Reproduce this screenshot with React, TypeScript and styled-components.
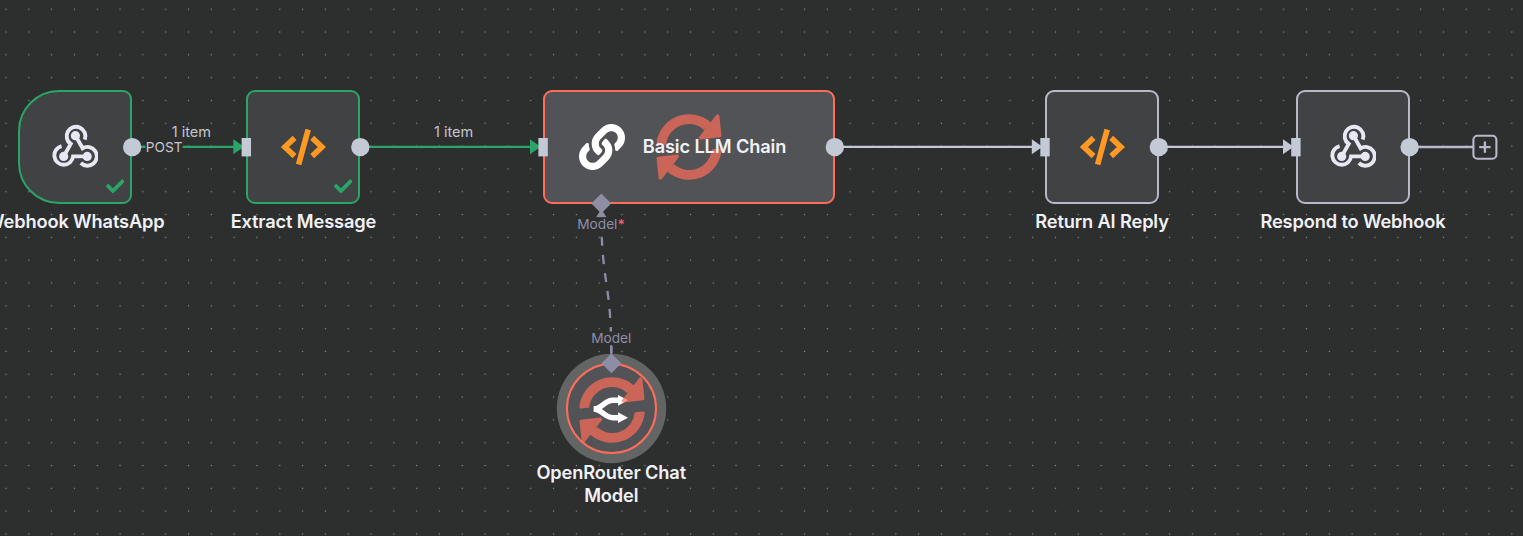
import React from 'react';
import styled, { createGlobalStyle, css } from 'styled-components';
import { FaCheck, FaLink } from 'react-icons/fa';

const colors = {
  canvas: '#2d2e2e',
  dot: '#8c8d8d',
  node: '#414244',
  nodeRunning: '#525356',
  success: '#29a568',
  error: '#ff6d5a',
  handle: '#c3c9d5',
  border: '#b5b9c9',
  sub: '#8d8ea6',
  text: '#f0f1f6',
};

const GlobalStyle = createGlobalStyle`
  body { margin: 0; background: ${colors.canvas}; }
  * { box-sizing: border-box; }
`;

const Canvas = styled.main`
  position: relative;
  width: 1523px;
  height: 536px;
  overflow: hidden;
  background: ${colors.canvas};
  font-family: Inter, 'Liberation Sans', sans-serif;
`;

const Layer = styled.svg`
  position: absolute;
  inset: 0;
  width: 100%;
  height: 100%;
`;

type Status = 'idle' | 'success' | 'error';
const borderOf: Record<Status, string> = {
  idle: colors.border,
  success: colors.success,
  error: colors.error,
};

/* One item on the free canvas: its box with the name below it. */
const CanvasNode = styled.section<{ $x: number; $y: number; $w?: number; $gap?: number }>`
  position: absolute;
  left: ${p => p.$x}px;
  top: ${p => p.$y}px;
  width: ${p => p.$w ?? 114}px;
  display: flex;
  flex-direction: column;
  align-items: center;
  gap: ${p => p.$gap ?? 6}px;
`;

const NodeBox = styled.div<{ $status: Status; $trigger?: boolean }>`
  position: relative;
  width: 100%;
  height: 114px;
  display: flex;
  align-items: center;
  justify-content: center;
  border: 2px solid ${p => borderOf[p.$status]};
  border-radius: ${p => (p.$trigger ? '41px 9px 9px 41px' : '9px')};
  background: ${p => (p.$status === 'error' ? colors.nodeRunning : colors.node)};
`;

const ChainBody = styled.div`
  width: 100%;
  display: flex;
  align-items: center;
  gap: 17.4px;
  padding: 0 0 1px 34.4px;
`;

const ModelCircle = styled.div`
  position: relative;
  width: 91.4px;
  height: 91.4px;
  display: flex;
  align-items: center;
  justify-content: center;
  border: 2px solid ${colors.error};
  border-radius: 50%;
  background: ${colors.nodeRunning};
  box-shadow: 0 0 0 9.2px #636464;
`;

const labelText = css`
  font-size: 18.25px;
  font-weight: 570;
  letter-spacing: -0.15px;
  line-height: 23px;
  color: ${colors.text};
`;

const Title = styled.span`
  ${labelText}
  position: relative;
  z-index: 1;
  white-space: nowrap;
`;

const NodeLabel = styled.div<{ $w?: number }>`
  ${labelText}
  width: ${p => p.$w ?? 220}px;
  text-align: center;
`;

const EdgeLabel = styled.div<{ $x: number; $y: number; $size?: number; $color?: string; $backed?: boolean }>`
  position: absolute;
  left: ${p => p.$x}px;
  top: ${p => p.$y}px;
  transform: translate(-50%, -50%);
  font-size: ${p => p.$size ?? 13.7}px;
  line-height: 13px;
  white-space: nowrap;
  color: ${p => p.$color ?? '#c3c6d0'};
  background: ${p => (p.$backed ? colors.canvas : 'transparent')};
`;

const Required = styled.span`
  font-weight: 600;
  color: #f9596c;
`;

const Check = styled(FaCheck)`
  position: absolute;
  right: 6px;
  bottom: 6.6px;
  width: 18.5px;
  height: 18.5px;
  color: ${colors.success};
`;

const SpinnerSvg = styled.svg<{ $x: number; $y: number }>`
  position: absolute;
  left: ${p => p.$x}px;
  top: ${p => p.$y}px;
  width: 70px;
  height: 70px;
  opacity: 0.7;
`;

const Spinner = ({ x, y }: { x: number; y: number }) => (
  <SpinnerSvg $x={x} $y={y} viewBox="-35 -35 70 70" fill={colors.error} stroke={colors.error} strokeLinejoin="round">
    {[0, 180].map(angle => (
      <g key={angle} transform={`rotate(${angle})`}>
        <path
          d="M-31.8 -2.5A32 32 0 0 1 21.6 -23.6L15 -18.2A23.4 23.4 0 0 0 -23.6 -3.2Z"
          strokeWidth="1.8"
        />
        <path d="M28.6 -31L30.8 -11.4L11.6 -9.2Z" strokeWidth="3.4" />
      </g>
    ))}
  </SpinnerSvg>
);

const ChainLink = styled(FaLink)`
  width: 46px;
  height: 46px;
  flex: none;
  color: #fff;
`;

const WebhookIcon = () => (
  <svg width="46" height="46" viewBox="0 0 46 46" fill="none" stroke="#e6e9f4" strokeWidth="3.9">
    <path d="M32.8 15.6A9.4 9.4 0 1 0 18.7 19.9L11.7 32.4" />
    <path d="M9.6 22.2A9.4 9.4 0 1 0 21.1 32.4H35.2" />
    <path d="M28.8 39A9.4 9.4 0 1 0 30.6 24.2L23.5 11.6" />
    <g fill="#e6e9f4" stroke="none">
      <circle cx="23.4" cy="11.7" r="4.6" />
      <circle cx="11.7" cy="32.4" r="4.6" />
      <circle cx="35.2" cy="32.4" r="4.6" />
    </g>
  </svg>
);

const CodeIcon = () => (
  <svg width="46" height="46" viewBox="0 0 46 46" fill="none" stroke="#ff9922" strokeWidth="5.6">
    <path d="M14.6 13.9L4.9 23L14.6 32.1" />
    <path d="M32.2 13.9L41.9 23L32.2 32.1" />
    <path d="M28.2 5.6L18.6 40.4" />
  </svg>
);

const RouterIcon = () => (
  <svg width="36" height="30" viewBox="0 0 36 30" fill="none" stroke="#fff" strokeWidth="5.4">
    <path d="M0.8 15C9 15 11 6.3 20 6.3H26" />
    <path d="M0.8 15C9 15 11 23.7 20 23.7H26" />
    <path d="M25 0.9L35 6.3L25 11.7ZM25 18.3L35 23.7L25 29.1Z" fill="#fff" stroke="none" />
  </svg>
);

const DotGrid = () => (
  <Layer>
    <defs>
      <pattern id="dots" x="-5.4" y="-2.2" width="22.816" height="22.816" patternUnits="userSpaceOnUse">
        <circle cx="11.4" cy="11.4" r="0.7" fill={colors.dot} />
      </pattern>
    </defs>
    <rect width="100%" height="100%" fill="url(#dots)" />
  </Layer>
);

const Edges = () => (
  <Layer fill="none" strokeWidth="2.3">
    <g stroke={colors.success}>
      <path d="M132 146.8H235M360 146.8H532" />
    </g>
    <g stroke={colors.handle}>
      <path d="M835 146.8H1034M1159 146.8H1285" />
    </g>
    <path d="M1410 147H1473" stroke={colors.border} />
    <path d="M611.3 362V346" stroke={colors.sub} />
    <path
      d="M611.3 353C611.3 283 601.3 283 601.3 213"
      stroke={colors.sub}
      strokeDasharray="9.1 9.1"
      strokeDashoffset="-16.7"
    />
    <g fill={colors.success}>
      <path d="M233.3 139.2L244 146.8L233.3 154.2Z" />
      <path d="M530 139.2L540.7 146.8L530 154.2Z" />
    </g>
    <g fill={colors.handle}>
      <path d="M1031.8 139.2L1042.5 146.8L1031.8 154.2Z" />
      <path d="M1283 139.2L1293.7 146.8L1283 154.2Z" />
    </g>
    <path d="M601.3 209L606.5 217.3H596.1Z" fill={colors.sub} />
  </Layer>
);

const Handles = () => (
  <Layer>
    <g fill={colors.handle}>
      {[132.2, 360.3, 834.8, 1158.8, 1409.6].map(x => (
        <circle key={x} cx={x} cy={147.1} r={9.2} />
      ))}
      {[241.6, 538.4, 1040.3, 1291.2].map(x => (
        <rect key={x} x={x} y={138} width={9.4} height={18.4} />
      ))}
    </g>
    <g fill={colors.sub}>
      <path d="M601.3 193.6L611.2 203.5L601.3 213.4L591.4 203.5Z" />
      <path d="M611.4 353.4L621.3 363.3L611.4 373.2L601.5 363.3Z" />
    </g>
    <g fill="none" stroke={colors.border}>
      <rect x="1473.4" y="135.7" width="23" height="23" rx="4" strokeWidth="2.1" fill={colors.canvas} />
      <path d="M1484.9 141.4V152.8M1479.2 147.1H1490.6" strokeWidth="2.3" />
    </g>
  </Layer>
);

export default function App() {
  return (
    <Canvas>
      <GlobalStyle />
      <DotGrid />
      <Edges />
      <CanvasNode $x={18.3} $y={90}>
        <NodeBox $status="success" $trigger>
          <WebhookIcon />
          <Check />
        </NodeBox>
        <NodeLabel>Webhook WhatsApp</NodeLabel>
      </CanvasNode>
      <CanvasNode $x={246.4} $y={90}>
        <NodeBox $status="success">
          <CodeIcon />
          <Check />
        </NodeBox>
        <NodeLabel>Extract Message</NodeLabel>
      </CanvasNode>
      <CanvasNode $x={543} $y={90} $w={292}>
        <NodeBox $status="error">
          <Spinner x={109.3} y={19.7} />
          <ChainBody>
            <ChainLink />
            <Title>Basic LLM Chain</Title>
          </ChainBody>
        </NodeBox>
      </CanvasNode>
      <CanvasNode $x={1045} $y={90}>
        <NodeBox $status="idle">
          <CodeIcon />
        </NodeBox>
        <NodeLabel>Return AI Reply</NodeLabel>
      </CanvasNode>
      <CanvasNode $x={1296} $y={90}>
        <NodeBox $status="idle">
          <WebhookIcon />
        </NodeBox>
        <NodeLabel>Respond to Webhook</NodeLabel>
      </CanvasNode>
      <CanvasNode $x={565.5} $y={363} $w={91.4} $gap={6.6}>
        <ModelCircle>
          <RouterIcon />
          <Spinner x={9.4} y={9.5} />
        </ModelCircle>
        <NodeLabel $w={160}>OpenRouter Chat Model</NodeLabel>
      </CanvasNode>
      <Handles />
      <EdgeLabel $x={191.3} $y={131.3} $size={14.5}>1 item</EdgeLabel>
      <EdgeLabel $x={164.2} $y={147.3} $backed>POST</EdgeLabel>
      <EdgeLabel $x={453.6} $y={131.3} $size={14.5}>1 item</EdgeLabel>
      <EdgeLabel $x={601} $y={224} $color={colors.sub} $backed>
        Model<Required>*</Required>
      </EdgeLabel>
      <EdgeLabel $x={611.3} $y={338.3} $color={colors.sub} $backed>Model</EdgeLabel>
    </Canvas>
  );
}
